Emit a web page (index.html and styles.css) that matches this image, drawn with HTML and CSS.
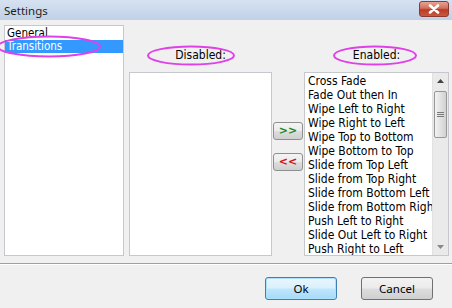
FILE: index.html
```html
<!DOCTYPE html>
<html>
<head>
<meta charset="utf-8">
<link rel="stylesheet" href="styles.css">
</head>
<body>
<div class="window">
  <div class="titlebar">
    <span class="title">Settings</span>
    <div class="close">
      <svg width="14" height="10" viewBox="0 0 14 10"><path d="M3 1.5 L11 8.5 M11 1.5 L3 8.5" stroke="#fff" stroke-width="2.6" stroke-linecap="round"/></svg>
    </div>
  </div>
  <div class="content">
    <ul class="list pages">
      <li>General</li>
      <li class="selected">Transitions</li>
    </ul>
    <div class="label disabled-label">Disabled:</div>
    <div class="label enabled-label">Enabled:</div>
    <div class="list disabled-list"></div>
    <div class="movers">
      <button class="mover add">&gt;&gt;</button>
      <button class="mover remove">&lt;&lt;</button>
    </div>
    <div class="list enabled-list">
      <ul class="items">
        <li>Cross Fade</li>
        <li>Fade Out then In</li>
        <li>Wipe Left to Right</li>
        <li>Wipe Right to Left</li>
        <li>Wipe Top to Bottom</li>
        <li>Wipe Bottom to Top</li>
        <li>Slide from Top Left</li>
        <li>Slide from Top Right</li>
        <li>Slide from Bottom Left</li>
        <li>Slide from Bottom Right</li>
        <li>Push Left to Right</li>
        <li>Slide Out Left to Right</li>
        <li>Push Right to Left</li>
      </ul>
      <div class="scrollbar">
        <div class="arrow up"><svg width="7" height="4" viewBox="0 0 7 4"><path d="M0 4 L3.5 0 L7 4Z" fill="#444"/></svg></div>
        <div class="track">
          <div class="thumb"><span></span><span></span><span></span></div>
        </div>
        <div class="arrow down"><svg width="7" height="4" viewBox="0 0 7 4"><path d="M0 0 L3.5 4 L7 0Z" fill="#888"/></svg></div>
      </div>
    </div>
  </div>
  <div class="footer">
    <button class="btn default">Ok</button>
    <button class="btn">Cancel</button>
  </div>
  <svg class="annotations" width="452" height="308" viewBox="0 0 452 308">
    <ellipse cx="49" cy="46.5" rx="51" ry="10" fill="none" stroke="#e040e8" stroke-width="2"/>
    <ellipse cx="191" cy="55.5" rx="43" ry="9" fill="none" stroke="#e040e8" stroke-width="2"/>
    <ellipse cx="375" cy="55.5" rx="41" ry="9" fill="none" stroke="#e040e8" stroke-width="2"/>
  </svg>
</div>
</body>
</html>
```

FILE: styles.css
```css
* { box-sizing: border-box; }
html, body { margin: 0; padding: 0; }
body {
  width: 452px;
  height: 308px;
  overflow: hidden;
  background: #f0f0f0;
  font-family: "DejaVu Sans Condensed", "DejaVu Sans", sans-serif;
  font-size: 11px;
  color: #000;
}
.window {
  position: relative;
  width: 452px;
  height: 308px;
  display: flex;
  flex-direction: column;
}
.titlebar {
  height: 20px;
  flex: none;
  display: flex;
  align-items: center;
  justify-content: space-between;
  padding: 0 3px 0 4px;
  background: linear-gradient(#d6e2f1, #c0d1e7);
}
.title {
  font-family: "Noto Sans", "Open Sans", sans-serif;
  font-size: 11.5px;
  color: #1e1e1e;
}
.close {
  width: 30px;
  height: 16px;
  margin-top: -2px;
  border: 1px solid #8a3b33;
  border-radius: 3px;
  background: linear-gradient(#e8a493 0%, #d26e5c 45%, #bb3b25 55%, #c9593f 100%);
  display: flex;
  align-items: center;
  justify-content: center;
}
.content {
  flex: none;
  display: grid;
  grid-template-columns: 120px 148px 32px 145px;
  grid-template-rows: 47px 184px;
  padding: 5px 0 0 4px;
}
.list {
  background: #fff;
  border: 1px solid #c5c8cc;
  margin: 0;
  padding: 0;
  list-style: none;
}
.pages {
  grid-column: 1;
  grid-row: 1 / span 2;
  padding-top: 1px;
}
.pages li {
  height: 13px;
  line-height: 13px;
  padding-left: 2px;
  font-size: 11.5px;
}
.pages li.selected {
  background: #3399ff;
  color: #fff;
}
.label {
  grid-row: 1;
  align-self: start;
  margin-top: 24px;
  text-align: center;
  line-height: 13px;
  font-size: 12px;
}
.disabled-label { grid-column: 2; margin-left: 5px; }
.enabled-label { grid-column: 4; }
.disabled-list {
  grid-column: 2;
  grid-row: 2;
  margin-left: 5px;
}
.movers {
  grid-column: 3;
  grid-row: 2;
  display: flex;
  flex-direction: column;
  align-items: center;
  gap: 13px;
  padding-top: 50px;
}
.mover {
  width: 30px;
  height: 18px;
  padding: 0;
  border: 1px solid #8e8f8f;
  border-radius: 3px;
  background: linear-gradient(#f4f4f4 0%, #ebebeb 48%, #dddddd 52%, #cfcfcf 100%);
  font-family: "DejaVu Sans", sans-serif;
  font-size: 11px;
  font-weight: bold;
  line-height: 14px;
}
.mover.add { color: #1a8a1a; }
.mover.remove { color: #d01010; }
.enabled-list {
  grid-column: 4;
  grid-row: 2;
  display: flex;
  overflow: hidden;
}
.items {
  flex: 1;
  margin: 0;
  padding: 1px 0 0 3px;
  list-style: none;
  overflow: hidden;
  white-space: nowrap;
}
.items li {
  height: 14px;
  line-height: 14px;
  font-size: 12px;
}
.scrollbar {
  flex: none;
  width: 16px;
  display: flex;
  flex-direction: column;
  background: #eaeaea;
  border-left: 1px solid #e2e2e2;
}
.arrow {
  height: 16px;
  display: flex;
  align-items: center;
  justify-content: center;
}
.track {
  flex: 1;
  padding: 2px 1px 0 1px;
}
.thumb {
  height: 47px;
  border: 1px solid #979797;
  border-radius: 2px;
  background: linear-gradient(90deg, #f2f2f2, #e2e2e2 50%, #d2d2d2);
  display: flex;
  flex-direction: column;
  align-items: center;
  justify-content: center;
  gap: 1px;
}
.thumb span {
  width: 7px;
  height: 1px;
  background: #7a7a7a;
}
.footer {
  flex: 1;
  margin-top: 7px;
  border-top: 1px solid #a0a0a0;
  box-shadow: inset 0 1px 0 #fff;
  display: flex;
  justify-content: flex-end;
  align-items: flex-start;
  gap: 24px;
  padding: 13px 19px 0 0;
}
.btn {
  width: 72px;
  height: 23px;
  padding: 0;
  border: 1px solid #707070;
  border-radius: 3px;
  background: linear-gradient(#f2f2f2 0%, #ebebeb 48%, #dddddd 52%, #cfcfcf 100%);
  font-family: "Noto Sans", "Open Sans", sans-serif;
  font-size: 11.5px;
  color: #000;
}
.btn.default {
  border-color: #3c7fb1;
  background: linear-gradient(#eaf6fd 0%, #d9f0fc 48%, #bee6fd 52%, #a7d9f5 100%);
  box-shadow: inset 0 0 0 1px #aee1fb;
}
.annotations {
  position: absolute;
  left: 0;
  top: 0;
  pointer-events: none;
}
```
